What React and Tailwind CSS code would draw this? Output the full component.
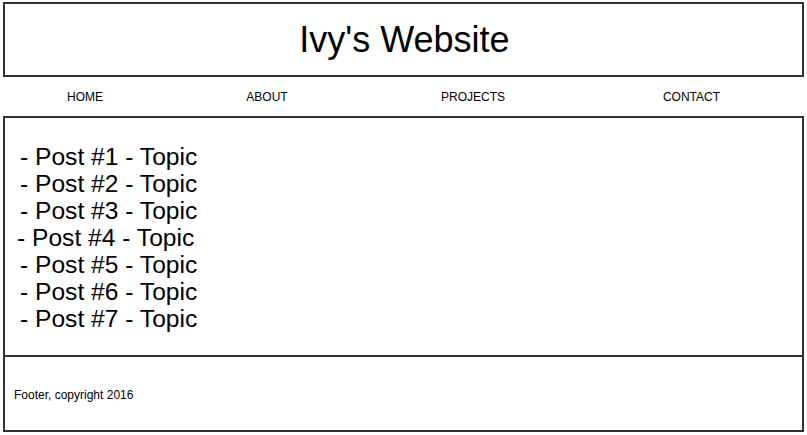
export default function App() {
  const posts = [1, 2, 3, 4, 5, 6, 7];
  return (
    <div className="w-[807px] h-[435px] bg-white text-black" style={{ fontFamily: '"Liberation Sans", Arial, sans-serif' }}>
      <div className="ml-[3px] w-[801px] pt-[2px]">
        <header className="h-[75px] border-2 border-[#333] flex items-center justify-center">
          <h1 className="text-[36px] leading-none font-normal ml-[2px]">Ivy's Website</h1>
        </header>
        <nav className="h-[39px] grid grid-cols-[164px_200px_212px_225px] items-center text-[12px] leading-none">
          <div className="text-center">HOME</div>
          <div className="text-center">ABOUT</div>
          <div className="text-center">PROJECTS</div>
          <div className="text-center">CONTACT</div>
        </nav>
        <main className="h-[241px] border-2 border-[#333] pt-[25px] pl-[15px]">
          {posts.map((n) => (
            <div key={n} className={`text-[24.6px] leading-[27px] ${n === 4 ? "-ml-[3px]" : ""}`}>
              - Post #{n} - Topic
            </div>
          ))}
        </main>
        <footer className="h-[75px] border-2 border-t-0 border-[#333] flex items-center pl-[9px] pt-[3px] text-[12px] leading-none">
          Footer, copyright 2016
        </footer>
      </div>
    </div>
  );
}
